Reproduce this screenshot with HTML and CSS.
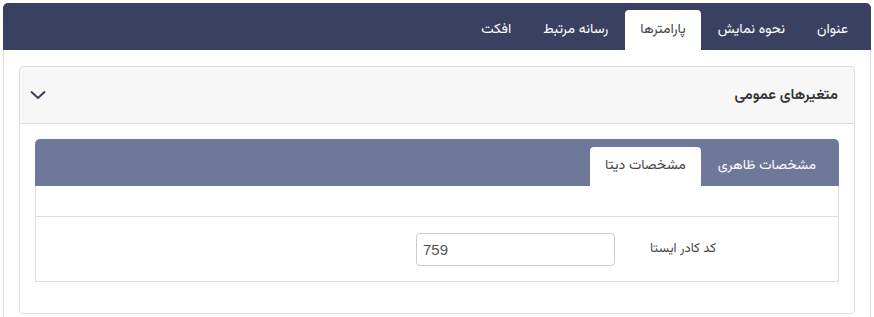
FILE: index.html
```html
<!DOCTYPE html>
<html lang="fa" dir="rtl">
<head>
<meta charset="utf-8">
<title>پارامترها</title>
<link rel="stylesheet" href="styles.css">
</head>
<body>
<div class="page">
  <div class="topbar">
    <ul class="nav">
      <li class="nav-item">عنوان</li>
      <li class="nav-item">نحوه نمایش</li>
      <li class="nav-item active">پارامترها</li>
      <li class="nav-item">رسانه مرتبط</li>
      <li class="nav-item">افکت</li>
    </ul>
  </div>
  <div class="tab-content">
    <div class="card">
      <div class="card-head">
        <span class="card-title">متغیرهای عمومی</span>
        <svg class="chevron" width="16" height="10" viewBox="0 0 16 10"><path d="M1.5 2 L8 8 L14.5 2" fill="none" stroke="#333b57" stroke-width="1.8" stroke-linecap="round" stroke-linejoin="round"/></svg>
      </div>
      <div class="card-body">
        <div class="panel">
          <div class="panel-head">
            <ul class="subnav">
              <li class="sub-item">مشخصات ظاهری</li>
              <li class="sub-item active">مشخصات دیتا</li>
            </ul>
          </div>
          <div class="panel-body">
            <div class="spacer"></div>
            <div class="form-row">
              <label class="form-label">کد کادر ایستا</label>
              <input class="form-input" type="text" value="759" dir="ltr">
            </div>
          </div>
        </div>
      </div>
    </div>
  </div>
</div>
</body>
</html>
```

FILE: styles.css
```css
* { box-sizing: border-box; }
html, body { margin: 0; padding: 0; background: #fff; }
body {
  font-family: "Vazirmatn", "Noto Sans Arabic", "DejaVu Sans", sans-serif;
  color: #333;
  padding: 3px 3px 0 3px;
}
.page { width: 868px; }
.topbar {
  background: #3a4160;
  height: 47px;
  border-radius: 5px 5px 0 0;
  display: flex;
  align-items: flex-end;
  padding-right: 8px;
}
.nav {
  list-style: none;
  margin: 0;
  padding: 0;
  display: flex;
  gap: 2px;
}
.nav-item {
  height: 40px;
  line-height: 40px;
  padding: 0 15px;
  font-size: 14px;
  color: #fff;
  border-radius: 4px 4px 0 0;
}
.nav-item.active {
  background: #fff;
  color: #444;
}
.tab-content {
  border: 1px solid #ddd;
  border-top: none;
  border-bottom: none;
  padding: 16px 15px 5px 15px;
}
.card {
  border: 1px solid #ddd;
  border-radius: 4px;
  background: #fff;
}
.card-head {
  background: #f7f7f7;
  height: 57px;
  border-bottom: 1px solid #ddd;
  border-radius: 4px 4px 0 0;
  display: flex;
  align-items: center;
  justify-content: space-between;
  padding: 0 16px 0 10px;
}
.card-title {
  font-size: 15px;
  font-weight: 600;
  color: #333;
}
.chevron { display: block; }
.card-body {
  padding: 15px 15px 31px 15px;
}
.panel-head {
  background: #6e7899;
  height: 47px;
  border-radius: 5px 5px 0 0;
  display: flex;
  align-items: flex-end;
  padding-right: 8px;
}
.subnav {
  list-style: none;
  margin: 0;
  padding: 0;
  display: flex;
  gap: 2px;
}
.sub-item {
  height: 39px;
  line-height: 38px;
  padding: 0 15px;
  font-size: 14px;
  color: #fff;
  border-radius: 4px 4px 0 0;
}
.sub-item.active {
  background: #fff;
  color: #444;
}
.panel-body {
  border: 1px solid #ddd;
  border-top: none;
}
.spacer {
  height: 31px;
  border-bottom: 1px solid #ddd;
}
.form-row {
  height: 64px;
  display: flex;
  align-items: center;
  padding-right: 122px;
}
.form-label {
  width: 101px;
  font-size: 13px;
  font-weight: 400;
  color: #444;
}
.form-input {
  width: 199px;
  height: 33px;
  border: 1px solid #ccc;
  border-radius: 4px;
  padding: 0 6px;
  font-family: "Liberation Sans", Arial, sans-serif;
  font-size: 15px;
  color: #555;
  text-align: left;
  background: #fff;
}
```
